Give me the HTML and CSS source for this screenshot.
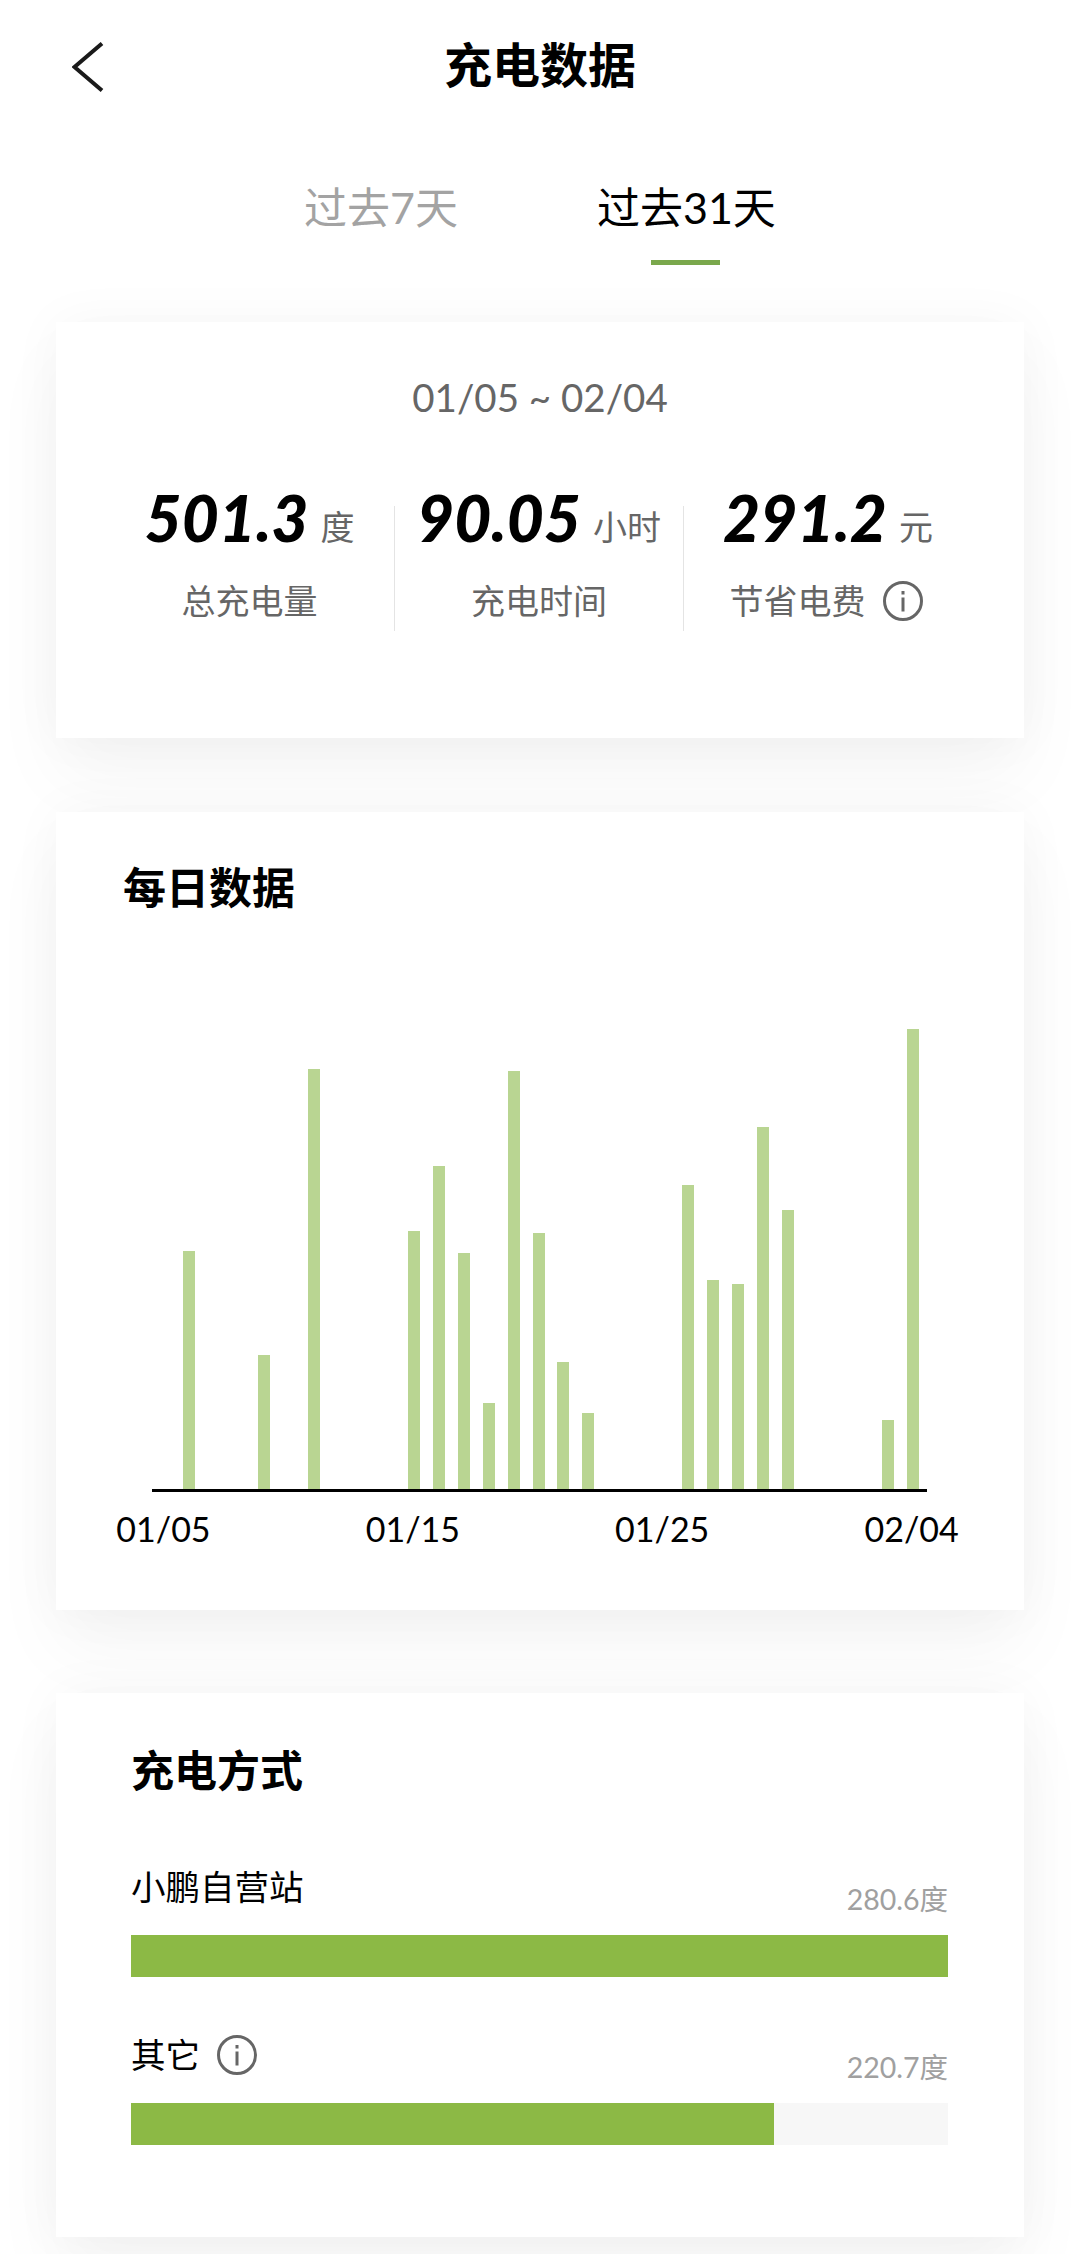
FILE: index.html
```html
<!DOCTYPE html>
<html lang="zh-CN">
<head>
    <meta charset="UTF-8">
    <meta name="viewport" content="width=device-width, initial-scale=1.0">
    <title>充电数据</title>
    <link rel="stylesheet" href="styles.css">
</head>
<body>
    <header class="topbar">
        <svg class="back" viewBox="0 0 32 50" width="32" height="50" aria-hidden="true">
            <path d="M30 1.5 2.500 25 30 48.500" fill="none" stroke="#1a1a1a" stroke-width="4"/>
        </svg>
        <h1>充电数据</h1>
    </header>

    <nav class="tabs">
        <span class="tab">过去7天</span>
        <span class="tab tab-active">过去31天</span>
    </nav>

    <section class="card summary">
        <p class="range">01/05 ~ 02/04</p>
        <div class="stats">
            <div class="stat">
                <div class="stat-value"><b>501.3</b><span>度</span></div>
                <div class="stat-label">总充电量</div>
            </div>
            <div class="stat">
                <div class="stat-value"><b>90.05</b><span>小时</span></div>
                <div class="stat-label">充电时间</div>
            </div>
            <div class="stat">
                <div class="stat-value"><b>291.2</b><span>元</span></div>
                <div class="stat-label">节省电费
                    <svg class="info" viewBox="0 0 40 40" aria-hidden="true">
                        <circle cx="20" cy="20" r="18.500" fill="none" stroke="#666" stroke-width="3"/>
                        <rect x="18.500" y="10" width="3" height="3.500" fill="#666"/>
                        <rect x="18.500" y="16.500" width="3" height="14" fill="#666"/>
                    </svg>
                </div>
            </div>
        </div>
    </section>

    <section class="card daily">
        <h2>每日数据</h2>
        <div class="chart">
            <div class="bars" id="bars"></div>
            <div class="ticks">
                <span class="tick t1">01/05</span>
                <span class="tick t2">01/15</span>
                <span class="tick t3">01/25</span>
                <span class="tick t4">02/04</span>
            </div>
        </div>
    </section>

    <section class="card method">
        <h2>充电方式</h2>
        <div class="row">
            <div class="row-head">
                <span class="row-name">小鹏自营站</span>
                <span class="row-num">280.6度</span>
            </div>
            <div class="track"><div class="fill" style="width: 100%"></div></div>
        </div>
        <div class="row">
            <div class="row-head">
                <span class="row-name">其它
                    <svg class="info" viewBox="0 0 40 40" aria-hidden="true">
                        <circle cx="20" cy="20" r="18.500" fill="none" stroke="#666" stroke-width="3"/>
                        <rect x="18.500" y="10" width="3" height="3.500" fill="#666"/>
                        <rect x="18.500" y="16.500" width="3" height="14" fill="#666"/>
                    </svg>
                </span>
                <span class="row-num">220.7度</span>
            </div>
            <div class="track"><div class="fill" style="width: 78.7%"></div></div>
        </div>
    </section>

    <script>
        // column index (day) -> bar height in px
        const days = { 1: 238, 4: 134, 6: 420, 10: 258, 11: 323, 12: 236, 13: 86, 14: 418, 15: 256, 16: 127, 17: 76, 21: 304, 22: 209, 23: 205, 24: 362, 25: 279, 29: 69, 30: 460 };
        const bars = document.getElementById('bars');
        for (let i = 0; i < 31; i++) {
            const col = document.createElement('div');
            col.classList.add('bar-col');
            if (days[i]) {
                const bar = document.createElement('div');
                bar.classList.add('bar');
                bar.style.height = days[i] + 'px';
                col.appendChild(bar);
            }
            bars.appendChild(col);
        }
    </script>
</body>
</html>
```

FILE: styles.css
```css
* {
    box-sizing: border-box;
}
html, body {
    margin: 0;
    padding: 0;
}
body {
    width: 1080px;
    height: 2254px;
    overflow: hidden;
    background-color: #fff;
    font-family: "Lato", "Noto Sans CJK SC", sans-serif;
    color: #000;
}
.topbar {
    position: relative;
    height: 130px;
    display: flex;
    justify-content: center;
    padding-top: 32px;
}
.back {
    position: absolute;
    left: 72px;
    top: 42px;
}
h1 {
    margin: 0;
    font-size: 48px;
    line-height: 66px;
    font-weight: 700;
}
.tabs {
    height: 192px;
    padding-left: 304px;
    display: flex;
    gap: 139px;
    padding-top: 48px;
    align-items: flex-start;
}
.tab {
    position: relative;
    font-size: 43px;
    line-height: 60px;
    color: #a3a3a3;
}
.tab-active {
    color: #000;
}
.tab-active::after {
    content: "";
    position: absolute;
    left: 50%;
    bottom: -27px;
    width: 69px;
    height: 5px;
    margin-left: -35px;
    background-color: #7aa84c;
}
.card {
    width: 968px;
    margin-left: 56px;
    background-color: #fff;
    box-shadow: 0 40px 70px rgba(0, 0, 0, 0.04), 0 0 50px rgba(0, 0, 0, 0.04);
}
.summary {
    height: 416px;
    padding-top: 50px;
    margin-bottom: 74px;
}
.range {
    margin: 0;
    text-align: center;
    font-size: 38.500px;
    line-height: 50px;
    color: #666;
}
.stats {
    display: grid;
    grid-template-columns: repeat(3, 289px);
    margin: 84px 0 0 49px;
}
.stat {
    height: 125px;
    border-left: 1px solid #e4e4e4;
    text-align: center;
}
.stat:first-child {
    border-left: 0;
}
.stat-value {
    height: 70px;
    margin-top: -23px;
    white-space: nowrap;
}
.stat-value b {
    font-size: 64px;
    line-height: 70px;
    font-style: italic;
    font-weight: 900;
}
.stat-value span {
    position: relative;
    top: -2px;
    margin-left: 12px;
    font-size: 34px;
    color: #666;
}
.stat-label {
    display: flex;
    align-items: center;
    justify-content: center;
    gap: 17px;
    margin-top: 24px;
    font-size: 34px;
    line-height: 48px;
    color: #666;
}
.stat:last-child .stat-label {
    padding-right: 4px;
}
.info {
    width: 40px;
    height: 40px;
    flex: none;
}
.daily {
    height: 798px;
    padding: 46px 0 0 67px;
    margin-bottom: 83px;
}
h2 {
    margin: 0;
    font-size: 43px;
    line-height: 60px;
    font-weight: 700;
}
.chart {
    width: 775px;
    margin: 0 0 0 29px;
}
.bars {
    height: 574px;
    display: grid;
    grid-template-columns: repeat(31, 24.950px);
    align-items: end;
    justify-items: center;
    border-bottom: 3px solid #000;
}
.bar {
    width: 12px;
    background-color: #b9d592;
}
.ticks {
    display: grid;
    grid-template-columns: repeat(31, 24.950px);
    margin: 13px 0 0 -1px;
}
.tick {
    font-size: 34px;
    line-height: 48px;
    justify-self: center;
    white-space: nowrap;
}
.t1 { grid-column: 1; }
.t2 { grid-column: 11; }
.t3 { grid-column: 21; }
.t4 { grid-column: 31; }
.method {
    height: 544px;
    padding: 48px 76px 0 75px;
}
.row {
    margin-top: 60px;
}
.row + .row {
    margin-top: 52px;
}
.row-head {
    display: flex;
    justify-content: space-between;
    align-items: flex-end;
    height: 74px;
}
.row-name {
    display: flex;
    align-items: center;
    gap: 17px;
    font-size: 34.500px;
    line-height: 48px;
    margin-bottom: 24px;
}
.row-num {
    font-size: 28.500px;
    line-height: 40px;
    color: #a0a0a0;
    margin-bottom: 16px;
}
.track {
    height: 42px;
    background-color: #f7f7f7;
}
.fill {
    height: 100%;
    background-color: #8cb945;
}
```
